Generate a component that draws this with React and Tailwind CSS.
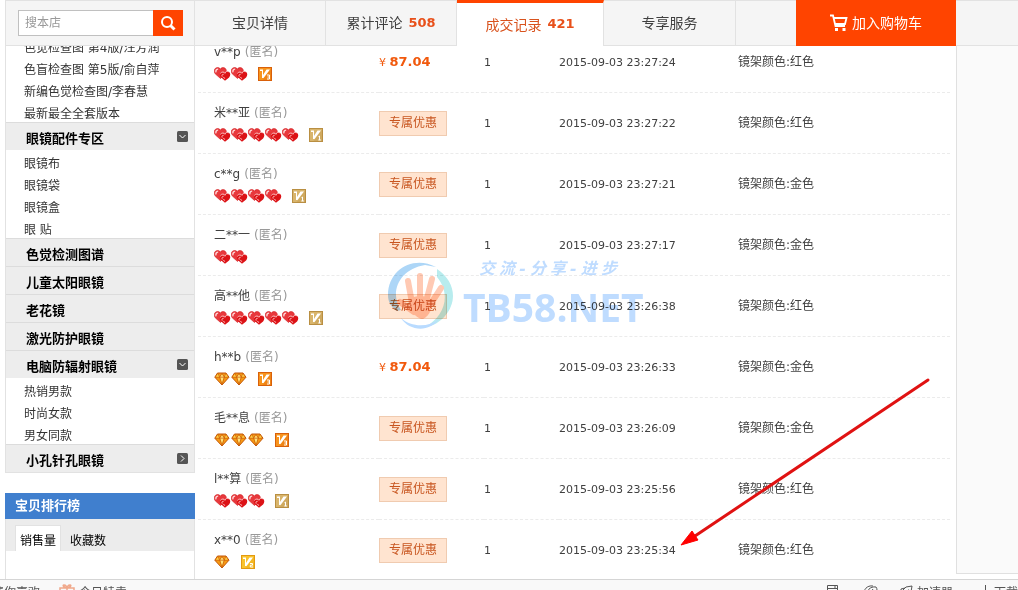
import React, { useState } from "react";
import clsx from "clsx";

const tabs = [
  { id: "detail", label: "宝贝详情", width: "w-[131px]" },
  { id: "reviews", label: "累计评论", count: 508, width: "w-[131px]" },
  { id: "deals", label: "成交记录", count: 421, width: "w-[147px]" },
  { id: "service", label: "专享服务", width: "w-[132px]" },
];

const categories = [
  {
    title: "眼镜配件专区",
    items: ["眼镜布", "眼镜袋", "眼镜盒", "眼 贴"],
    toggle: "down",
  },
  { title: "色觉检测图谱", items: [] },
  { title: "儿童太阳眼镜", items: [] },
  { title: "老花镜", items: [] },
  { title: "激光防护眼镜", items: [] },
  {
    title: "电脑防辐射眼镜",
    items: ["热销男款", "时尚女款", "男女同款"],
    toggle: "down",
  },
  { title: "小孔针孔眼镜", items: [], toggle: "right" },
];

const books = [
  "色觉检查图 第4版/汪芳润",
  "色盲检查图 第5版/俞自萍",
  "新编色觉检查图/李春慧",
  "最新最全全套版本",
];

const records = [
  { name: "v**p", rank: "heart", level: 2, vip: 3, price: "87.04", time: "23:27:24", color: "红色" },
  { name: "米**亚", rank: "heart", level: 5, vip: 1, time: "23:27:22", color: "红色" },
  { name: "c**g", rank: "heart", level: 4, vip: 1, time: "23:27:21", color: "金色" },
  { name: "二**一", rank: "heart", level: 2, time: "23:27:17", color: "金色" },
  { name: "高**他", rank: "heart", level: 5, vip: 1, time: "23:26:38", color: "红色" },
  { name: "h**b", rank: "diamond", level: 2, vip: 3, price: "87.04", time: "23:26:33", color: "金色" },
  { name: "毛**息", rank: "diamond", level: 3, vip: 3, time: "23:26:09", color: "金色" },
  { name: "l**算", rank: "heart", level: 3, vip: 1, time: "23:25:56", color: "红色" },
  { name: "x**0", rank: "diamond", level: 1, vip: 2, time: "23:25:34", color: "红色" },
];

const vipColors = {
  1: ["#d9b56c", "#b98f42"],
  2: ["#f9c32c", "#e39a10"],
  3: ["#f7941d", "#d9600a"],
};

function Heart() {
  return (
    <svg width="17" height="14" viewBox="0 0 17 14" aria-hidden="true">
      <path
        d="M6.500 11.500 1.200 6.800C-.6 4.400.2.900 3.200.6c1.500-.1 2.500.5 3.200 1.400C7.200.9 8.300.5 9.500.6c2.900.3 3.600 3.800 2 6z"
        fill="#e8383c"
        stroke="#d01c20"
        strokeWidth=".6"
      />
      <path d="M2 5.400C1.500 3.500 2.500 2 4.200 2.100" fill="none" stroke="#ffd6d6" strokeWidth="1.400" />
      <path
        d="M11 13.700 7 10.200C5 8.200 5.800 5.200 8.300 5c1.200 0 2 .5 2.600 1.300.6-2 2.400-2.600 4-1.500 2 1.500 1.600 4 .2 5.700z"
        fill="#dc1216"
      />
      <path d="M6.300 6.400C8 4.400 10.200 4.800 10.900 6.300c.6-2 2.400-2.500 4-1.500" fill="none" stroke="#ffd0d0" strokeWidth=".9" />
      <path d="M8.200 9.600C7.600 8 8.400 7.100 9.600 7.300M9.300 10.300l1.800 1.200" fill="none" stroke="#ffc4c4" />
    </svg>
  );
}

function Diamond() {
  return (
    <svg width="17" height="14" viewBox="0 0 17 14" aria-hidden="true">
      <path d="M3.500 1h8.500l3 4.200L8 13 .8 5.200z" fill="#f79a12" stroke="#c2570a" strokeWidth="1" />
      <path d="M1.800 5 4 2l2.200 3zM9.800 5 11.700 2l2.200 3z" fill="#ffd54a" />
      <path d="M6 5 8 2l2 3-2 6.500z" fill="#ffe27a" />
      <path d="M1 5.200h13.700M3.800 1.400 5.600 5 8 12.400 10.300 5l1.500-3.600M5.600 5 8 1.400 10.300 5" fill="none" stroke="#c75a0c" strokeWidth=".7" />
    </svg>
  );
}

function VipBadge({ level }) {
  const [light, dark] = vipColors[level];

  return (
    <svg width="14" height="14" viewBox="0 0 14 14" role="img" aria-label={`V${level}`}>
      <rect x=".5" y=".5" width="13" height="13" fill={light} stroke={dark} />
      <path d="M14 0v14H4z" fill={dark} opacity=".3" />
      <path d="M2 2.500h3V8l3.500-5.500H12L5.500 11H4V4H2z" fill="#fff" />
      {level === 1 && <path d="M10.500 12V8L9.500 8.600M9.300 12h2.600" fill="none" stroke="#fff" />}
      {level === 2 && <path d="M9 8.500h2.500v1.700H9.300V12H12" fill="none" stroke="#fff" />}
      {level === 3 && <path d="M9 8h2.500v4H9M9.500 10h2" fill="none" stroke="#fff" />}
    </svg>
  );
}

function Toggle({ dir }) {
  return (
    <svg width="11" height="11" viewBox="0 0 11 11" aria-hidden="true">
      <rect width="11" height="11" rx="1.500" fill="#555" />
      <path
        d={dir === "down" ? "M2.500 4 5.500 7l3-3" : "M4 2.500 7 5.500l-3 3"}
        fill="none"
        stroke="#fff"
      />
    </svg>
  );
}

function Header({ active, onChange }) {
  return (
    <header className="flex h-[46px] shrink-0 pl-[5px]">
      <form
        className="flex w-[190px] items-center border border-[#e2e2e2] bg-[#f5f5f5] pl-3"
        onSubmit={(e) => e.preventDefault()}
      >
        <input
          type="text"
          aria-label="搜本店"
          placeholder="搜本店"
          className="h-[26px] w-[135px] border border-r-0 border-[#c0c0c0] bg-white px-1.5 text-xs outline-none placeholder:text-[#999]"
        />
        <button
          type="submit"
          aria-label="搜索"
          className="flex h-[26px] w-[30px] items-center justify-center bg-[#ff4400]"
        >
          <svg width="16" height="16" viewBox="0 0 16 16" fill="none" stroke="#fff" strokeWidth="2">
            <circle cx="7" cy="7" r="5" />
            <path d="m10.500 10.500 4 4" strokeWidth="3" />
          </svg>
        </button>
      </form>

      <nav className="flex">
        {tabs.map((tab) => (
          <button
            key={tab.id}
            type="button"
            onClick={() => onChange(tab.id)}
            className={clsx(
              "flex items-center justify-center gap-1.5 border-r border-[#e2e2e2] text-sm",
              tab.width,
              active === tab.id
                ? "border-t-[3px] border-t-[#ff4400] bg-white text-[#d9531e]"
                : "border-y bg-[#f5f5f5] text-[#404040]",
            )}
          >
            {tab.label}
            {tab.count && (
              <b className="font-['DejaVu_Sans'] text-[13px] text-[#e8501a]">{tab.count}</b>
            )}
          </button>
        ))}
      </nav>

      <div className="flex-1 border-y border-[#e2e2e2] bg-[#f5f5f5]" />
      <button
        type="button"
        className="flex w-[160px] items-center justify-center gap-1 bg-[#ff4400] text-sm text-white"
      >
        <svg width="18" height="18" viewBox="0 0 18 18" fill="none" stroke="#fff" strokeWidth="1.800">
          <path d="M0 1.500h3L5.500 12H15M4 4h12.500L15 10H5" />
          <path d="M5 14h3v3H5zM12.500 14h3v3h-3z" fill="#fff" stroke="none" />
        </svg>
        加入购物车
      </button>
      <div className="w-[62px] border-y border-[#e2e2e2] bg-[#f5f5f5]" />
    </header>
  );
}

function ItemList({ items }) {
  return (
    <ul className="pl-[18px]">
      {items.map((item) => (
        <li key={item} className="h-[22px] leading-[28px]">
          <a href="#">{item}</a>
        </li>
      ))}
    </ul>
  );
}

function Sidebar() {
  const [rank, setRank] = useState("销售量");

  return (
    <aside className="ml-[5px] flex w-[190px] shrink-0 flex-col text-xs text-[#333]">
      <div className="-mt-3 border-x border-b border-[#e2e2e2]">
        <ItemList items={books} />
        {categories.map((cat) => (
          <section key={cat.title}>
            <button
              type="button"
              className="flex h-7 w-full items-center justify-between border-t border-[#dcdcdc] bg-[#ededed] pr-1.5 pl-5 text-[13px] font-bold text-black"
            >
              <span className="pt-1">{cat.title}</span>
              {cat.toggle && <Toggle dir={cat.toggle} />}
            </button>
            <ItemList items={cat.items} />
          </section>
        ))}
      </div>

      <section className="mt-5 flex flex-1 flex-col">
        <h2 className="bg-[#407fce] px-2.5 text-[13px] leading-[26px] font-bold text-white">
          宝贝排行榜
        </h2>
        <div className="flex h-8 items-end border-x border-[#e2e2e2] bg-[#ececec] pl-[9px] text-black">
          {["销售量", "收藏数"].map((label) => (
            <button
              key={label}
              type="button"
              onClick={() => setRank(label)}
              className={clsx(
                "h-[26px] border border-b-0 px-1 pt-1",
                rank === label ? "mr-1 border-[#e2e2e2] bg-white" : "border-transparent",
              )}
            >
              {label}
            </button>
          ))}
        </div>
        <div className="flex-1 border-x border-[#e2e2e2]" />
      </section>
    </aside>
  );
}

function Record({ item }) {
  const Icon = item.rank === "heart" ? Heart : Diamond;

  return (
    <tr className="h-[61px]">
      <td className="border-b border-dashed border-[#ebebeb] pl-4">
        <div className="mt-0.5 flex h-5 items-center gap-1 text-xs">
          <span>{item.name}</span>
          <span className="text-[#999]">(匿名)</span>
        </div>
        <div className="mt-0.5 flex h-5 items-center">
          {Array.from({ length: item.level }, (_, i) => (
            <Icon key={i} />
          ))}
          {item.vip && (
            <span className="ml-2.5">
              <VipBadge level={item.vip} />
            </span>
          )}
        </div>
      </td>
      <td className="border-b border-dashed border-[#ebebeb]">
        {item.price ? (
          <span className="text-[#f1590d]">
            ¥ <b className="text-[13px]">{item.price}</b>
          </span>
        ) : (
          <span className="flex h-[25px] w-[68px] items-center justify-center border border-[#f0cbb0] bg-[#ffe4d0] text-xs text-[#c8551f]">
            专属优惠
          </span>
        )}
      </td>
      <td className="border-b border-dashed border-[#ebebeb] pt-0.5">1</td>
      <td className="border-b border-dashed border-[#ebebeb] pt-0.5">2015-09-03 {item.time}</td>
      <td className="border-b border-dashed border-[#ebebeb] text-xs">镜架颜色:{item.color}</td>
    </tr>
  );
}

function Watermark() {
  return (
    <div className="pointer-events-none absolute top-[213px] left-[190px] flex gap-2 mix-blend-multiply">
      <svg width="70" height="72" viewBox="0 0 70 72" aria-hidden="true">
        <path d="M51 8C29-4 3 10 3 36c0 7 3 12 9 16l4-1C4 34 14 10 40 6z" fill="#add6f7" />
        <path d="M52 10c18 12 21 32 8 47-5 6-12 10-20 11 19-10 27-32 12-50z" fill="#b8ecee" />
        <path d="M16 59c10 9 27 10 38 1-10 14-30 12-38-1z" fill="#b9dbff" />
        <g fill="none" stroke="#ffc9b3" strokeLinecap="round" strokeWidth="6">
          <path d="M27 44 23 22M35 42 35 17M41 43 47 20M45 46 56 29M29 53 15 43" />
        </g>
        <path d="M25 40c6-4 16-4 21 1 3 5-1 16-8 19-6 0-15-8-13-20z" fill="#ffc9b3" />
      </svg>
      <div className="text-[#bfdcff]">
        <div className="ml-4 flex w-[138px] justify-between text-base leading-5 font-bold italic">
          {[..."交流-分享-进步"].map((char, i) => (
            <span key={i}>{char}</span>
          ))}
        </div>
        <div className="font-['Open_Sans'] text-[39px] leading-[56px] font-bold">TB58.NET</div>
      </div>
    </div>
  );
}

function Arrow() {
  return (
    <svg
      className="pointer-events-none absolute top-[332px] left-[485px]"
      width="252"
      height="170"
      viewBox="0 0 252 170"
      aria-hidden="true"
    >
      <path d="M248 2 12 160" stroke="#e01212" strokeWidth="3" strokeLinecap="round" />
      <path d="m1 167 11-14 6 9z" fill="#f00" stroke="#f00" />
    </svg>
  );
}

function Footer() {
  return (
    <footer className="flex h-[35px] shrink-0 items-start justify-between overflow-hidden border-t border-[#d5d5d5] bg-[#f9f9f9] pt-1 text-xs leading-[18px] text-[#555]">
      <div className="flex">
        <a href="#" className="-ml-2">猜你喜欢</a>
        <a href="#" className="ml-[19px] flex gap-1">
          <svg width="16" height="16" viewBox="0 0 16 16" fill="none" stroke="#f0a88a" strokeWidth="1.500">
            <path d="M1 4h14v4H1zM2 8v7h12V8M8 4v11M8 4C5 4 3 1 5 1s3 2 3 3c0-1 1-3 3-3s0 3-3 3" />
          </svg>
          今日特卖
        </a>
      </div>
      <div className="flex">
        <svg className="mr-6" width="13" height="16" viewBox="0 0 13 16" fill="none" stroke="#555">
          <path d="M1.500 1.500h10v13h-10zM1.500 4.500h10M8 3h2" />
        </svg>
        <svg className="mr-5" width="16" height="16" viewBox="0 0 16 16" fill="none" stroke="#555">
          <path d="M1 11C0 6 4 1 10 2M4 12C3 7 7 2 13 3M13 3c3 4-1 10-7 9M10 5 7 9" />
        </svg>
        <a href="#" className="mr-7 flex gap-1">
          <svg width="14" height="16" viewBox="0 0 14 16" fill="none" stroke="#555">
            <path d="M13 2 7 3 2 8l5 5 5-5zM2 8V5l4-1M9 6h1" />
          </svg>
          加速器
        </a>
        <a href="#" className="flex gap-1">
          <svg width="9" height="16" viewBox="0 0 9 16" fill="none" stroke="#555">
            <path d="M4.500 1v10M1 8l3.500 3.500L8 8" />
          </svg>
          下载
        </a>
      </div>
    </footer>
  );
}

export default function App() {
  const [active, setActive] = useState("deals");

  return (
    <div className="h-screen overflow-hidden bg-white font-['DejaVu_Sans','Noto_Sans_CJK_SC',sans-serif]">
      {/* the bottom bar is partly scrolled out of view */}
      <div className="flex h-[calc(100vh+24px)] flex-col">
        <Header active={active} onChange={setActive} />
        <div className="flex min-h-0 flex-1 overflow-hidden">
          <Sidebar />
          <main className="relative min-w-0 flex-1 pr-1.5 pl-[3px]">
            <table className="-mt-3.5 w-full table-fixed border-separate border-spacing-0 text-left text-[11px] text-[#404040]">
              <colgroup>
                <col className="w-[181px]" />
                <col className="w-[105px]" />
                <col className="w-[75px]" />
                <col className="w-[179px]" />
                <col />
              </colgroup>
              <tbody>
                {records.map((item) => (
                  <Record key={item.time} item={item} />
                ))}
              </tbody>
            </table>
            <Watermark />
            <Arrow />
          </main>
          <div className="mb-[5px] w-[62px] shrink-0 border-b border-l border-[#e0e0e0] bg-[#fafafa]" />
        </div>
        <Footer />
      </div>
    </div>
  );
}
